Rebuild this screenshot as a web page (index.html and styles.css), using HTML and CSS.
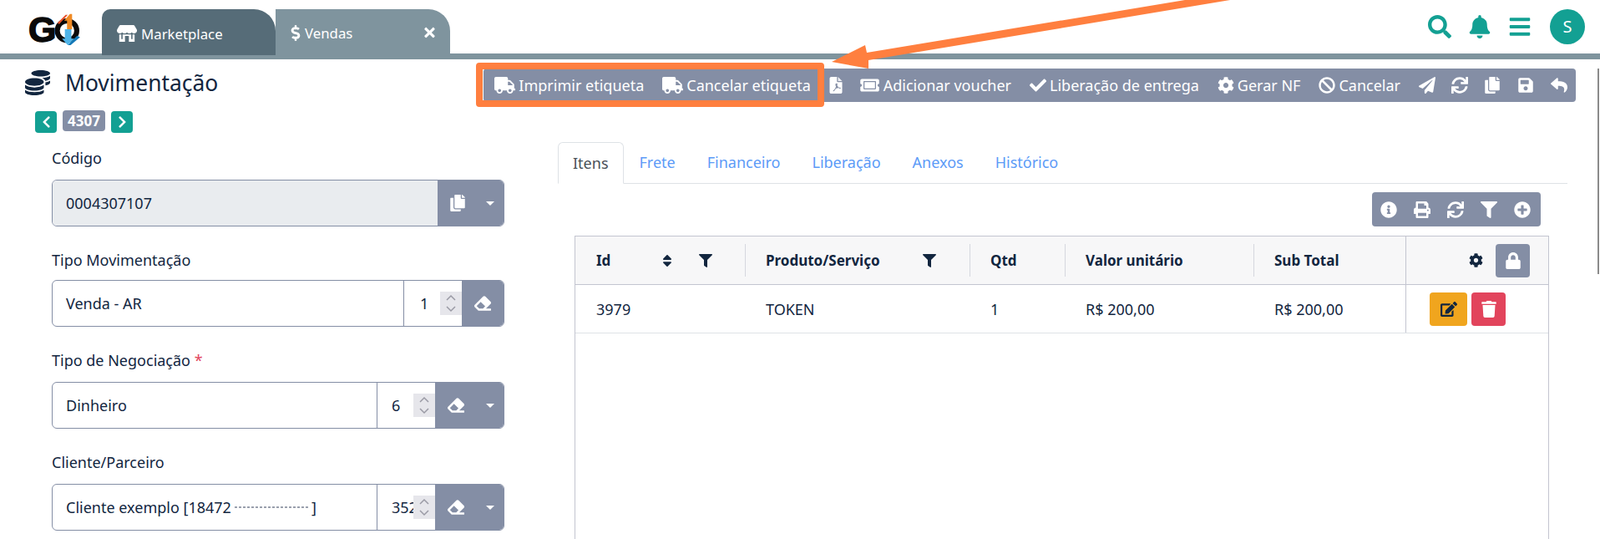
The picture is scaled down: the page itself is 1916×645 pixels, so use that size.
FILE: index.html
```html
<!DOCTYPE html>
<html lang="pt-BR">
  <head>
    <meta charset="UTF-8" />
    <title>Movimentação</title>
    <link rel="stylesheet" href="styles.css">
  </head>
  <body>
    <svg class="sprites" xmlns="http://www.w3.org/2000/svg">
      <symbol id="i-search" viewBox="0 0 512 512"><path d="M505 442.7L405.3 343c-4.5-4.5-10.6-7-17-7H372c27.6-35.3 44-79.7 44-128C416 93.1 322.9 0 208 0S0 93.1 0 208s93.1 208 208 208c48.3 0 92.7-16.4 128-44v16.3c0 6.4 2.5 12.5 7 17l99.7 99.7c9.4 9.4 24.6 9.4 33.9 0l28.3-28.3c9.4-9.4 9.4-24.6.1-34zM208 336c-70.7 0-128-57.2-128-128 0-70.7 57.2-128 128-128 70.7 0 128 57.2 128 128 0 70.7-57.2 128-128 128z"/></symbol>
      <symbol id="i-bell" viewBox="0 0 448 512"><path d="M224 512c35.32 0 63.97-28.65 63.97-64H160.03c0 35.35 28.65 64 63.97 64zm215.39-149.71c-19.32-20.76-55.47-51.99-55.47-154.29 0-77.7-54.48-139.9-127.94-155.16V32c0-17.67-14.32-32-31.98-32s-31.98 14.33-31.98 32v20.84C118.56 68.1 64.08 130.3 64.08 208c0 102.3-36.15 133.53-55.47 154.29-6 6.45-8.66 14.16-8.61 21.71.11 16.4 12.98 32 32.1 32h383.8c19.12 0 32-15.6 32.1-32 .05-7.55-2.61-15.27-8.61-21.71z"/></symbol>
      <symbol id="i-bars" viewBox="0 0 448 512"><path d="M16 132h416c8.837 0 16-7.163 16-16V76c0-8.837-7.163-16-16-16H16C7.163 60 0 67.163 0 76v40c0 8.837 7.163 16 16 16zm0 160h416c8.837 0 16-7.163 16-16v-40c0-8.837-7.163-16-16-16H16c-8.837 0-16 7.163-16 16v40c0 8.837 7.163 16 16 16zm0 160h416c8.837 0 16-7.163 16-16v-40c0-8.837-7.163-16-16-16H16c-8.837 0-16 7.163-16 16v40c0 8.837 7.163 16 16 16z"/></symbol>
      <symbol id="i-truck" viewBox="0 0 640 512"><path d="M624 352h-16V243.9c0-12.7-5.1-24.9-14.1-33.9L494 110.1c-9-9-21.2-14.1-33.9-14.1H416V48c0-26.5-21.5-48-48-48H48C21.5 0 0 21.5 0 48v320c0 26.5 21.5 48 48 48h16c0 53 43 96 96 96s96-43 96-96h128c0 53 43 96 96 96s96-43 96-96h48c8.8 0 16-7.2 16-16v-32c0-8.8-7.2-16-16-16zM160 464c-26.5 0-48-21.5-48-48s21.5-48 48-48 48 21.5 48 48-21.5 48-48 48zm320 0c-26.5 0-48-21.5-48-48s21.5-48 48-48 48 21.5 48 48-21.5 48-48 48zm80-208H416V144h44.1l99.9 99.9V256z"/></symbol>
      <symbol id="i-copy" viewBox="0 0 448 512"><path d="M320 448v40c0 13.255-10.745 24-24 24H24c-13.255 0-24-10.745-24-24V120c0-13.255 10.745-24 24-24h72v296c0 30.879 25.121 56 56 56h168zm0-344V0H152c-13.255 0-24 10.745-24 24v368c0 13.255 10.745 24 24 24h272c13.255 0 24-10.745 24-24V128H344c-13.2 0-24-10.8-24-24zm120.971-31.029L375.029 7.029A24 24 0 0 0 358.059 0H352v96h96v-6.059a24 24 0 0 0-7.029-16.97z"/></symbol>
      <symbol id="i-save" viewBox="0 0 448 512"><path d="M433.941 129.941l-83.882-83.882A48 48 0 0 0 316.118 32H48C21.49 32 0 53.49 0 80v352c0 26.51 21.49 48 48 48h352c26.51 0 48-21.49 48-48V163.882a48 48 0 0 0-14.059-33.941zM224 416c-35.346 0-64-28.654-64-64 0-35.346 28.654-64 64-64s64 28.654 64 64c0 35.346-28.654 64-64 64zm96-304.52V212c0 6.627-5.373 12-12 12H76c-6.627 0-12-5.373-12-12V108c0-6.627 5.373-12 12-12h228.52c3.183 0 6.235 1.264 8.485 3.515l3.48 3.48A11.996 11.996 0 0 1 320 111.48z"/></symbol>
      <symbol id="i-reply" viewBox="0 0 512 512"><path d="M8.309 189.836L184.313 37.851C199.719 24.546 224 35.347 224 56.015v80.053c160.629 1.839 288 34.032 288 186.258 0 61.441-39.581 122.309-83.333 154.132-13.653 9.931-33.111-2.533-28.077-18.631 45.344-145.012-21.507-183.51-176.59-185.742V360c0 20.7-24.3 31.453-39.687 18.164l-176.004-152c-11.071-9.562-11.086-26.753 0-36.328z"/></symbol>
      <symbol id="i-plane" viewBox="0 0 512 512"><path d="M476 3.2L12.5 270.6c-18.1 10.4-15.8 35.6 2.2 43.2L121 358.4l287.3-253.2c5.5-4.9 13.3 2.6 8.6 8.3L176 407v80.5c0 23.6 28.5 32.9 42.5 15.8L282 426l124.6 52.2c14.2 6 30.4-2.9 33-18.2l72-432C515 7.8 493.3-6.8 476 3.2z"/></symbol>
      <symbol id="i-sync" viewBox="0 0 512 512"><path d="M440.65 12.57l4 82.77A247.16 247.16 0 0 0 255.83 8C134.73 8 33.91 94.92 12.29 209.82A12 12 0 0 0 24.09 224h49.05a12 12 0 0 0 11.67-9.26 175.91 175.91 0 0 1 317-56.94l-101.46-4.86a12 12 0 0 0-12.57 12v47.41a12 12 0 0 0 12 12H500a12 12 0 0 0 12-12V12a12 12 0 0 0-12-12h-47.37a12 12 0 0 0-11.98 12.57zM255.83 432a175.61 175.61 0 0 1-146-77.8l101.8 4.87a12 12 0 0 0 12.57-12v-47.4a12 12 0 0 0-12-12H12a12 12 0 0 0-12 12V500a12 12 0 0 0 12 12h47.35a12 12 0 0 0 12-12.6l-4.15-82.57A247.17 247.17 0 0 0 255.83 504c121.11 0 221.93-86.92 243.55-201.82a12 12 0 0 0-11.8-14.18h-49.05a12 12 0 0 0-11.67 9.26A175.86 175.86 0 0 1 255.83 432z"/></symbol>
      <symbol id="i-cog" viewBox="0 0 512 512"><path d="M487.4 315.7l-42.6-24.6c4.3-23.2 4.3-47 0-70.2l42.6-24.6c4.9-2.8 7.1-8.6 5.5-14-11.1-35.6-30-67.8-54.7-94.6-3.8-4.1-10-5.1-14.8-2.3L380.8 110c-17.9-15.4-38.5-27.3-60.8-35.1V25.8c0-5.6-3.9-10.5-9.4-11.7-36.7-8.2-74.3-7.8-109.2 0-5.5 1.2-9.4 6.1-9.4 11.7V75c-22.2 7.9-42.8 19.8-60.8 35.1L88.7 85.5c-4.9-2.8-11-1.9-14.8 2.3-24.7 26.7-43.6 58.9-54.7 94.6-1.7 5.4.6 11.2 5.5 14L67.3 221c-4.3 23.2-4.3 47 0 70.2l-42.6 24.6c-4.9 2.8-7.1 8.6-5.5 14 11.1 35.6 30 67.8 54.7 94.6 3.8 4.1 10 5.1 14.8 2.3l42.6-24.6c17.9 15.4 38.5 27.3 60.8 35.1v49.2c0 5.6 3.9 10.5 9.4 11.7 36.7 8.2 74.3 7.8 109.2 0 5.5-1.2 9.4-6.1 9.4-11.7v-49.2c22.2-7.9 42.8-19.8 60.8-35.1l42.6 24.6c4.9 2.8 11 1.9 14.8-2.3 24.7-26.7 43.6-58.9 54.7-94.6 1.5-5.5-.7-11.3-5.6-14.1zM256 336c-44.1 0-80-35.9-80-80s35.9-80 80-80 80 35.9 80 80-35.9 80-80 80z"/></symbol>
      <symbol id="i-ban" viewBox="0 0 512 512"><path d="M256 8C119.034 8 8 119.033 8 256s111.034 248 248 248 248-111.034 248-248S392.967 8 256 8zm130.108 117.892c65.448 65.448 70 165.481 20.677 235.637L150.47 105.216c70.204-49.356 170.226-44.735 235.638 20.676zM125.892 386.108c-65.448-65.448-70-165.481-20.677-235.637L361.53 406.784c-70.203 49.356-170.226 44.736-235.638-20.676z"/></symbol>
      <symbol id="i-check" viewBox="0 0 512 512"><path d="M173.898 439.404l-166.4-166.4c-9.997-9.997-9.997-26.206 0-36.204l36.203-36.204c9.997-9.998 26.207-9.998 36.204 0L192 312.69 432.095 72.596c9.997-9.997 26.207-9.997 36.204 0l36.203 36.204c9.997 9.997 9.997 26.206 0 36.204l-294.4 294.401c-9.998 9.997-26.207 9.997-36.204-.001z"/></symbol>
      <symbol id="i-ticket" viewBox="0 0 576 512"><path d="M128 160h320v192H128V160zm400 96c0 26.51 21.49 48 48 48v96c0 26.51-21.49 48-48 48H48c-26.51 0-48-21.49-48-48v-96c26.51 0 48-21.49 48-48s-21.49-48-48-48v-96c0-26.51 21.49-48 48-48h480c26.51 0 48 21.49 48 48v96c-26.51 0-48 21.49-48 48zm-48-104c0-13.255-10.745-24-24-24H120c-13.255 0-24 10.745-24 24v208c0 13.255 10.745 24 24 24h336c13.255 0 24-10.745 24-24V152z"/></symbol>
      <symbol id="i-pdf" viewBox="0 0 384 512"><path d="M224 0H48C21.5 0 0 21.5 0 48v416c0 26.5 21.5 48 48 48h288c26.5 0 48-21.5 48-48V160H248c-13.2 0-24-10.8-24-24z"/><path d="M256 0v128h128z" opacity=".85"/><path fill="#848ea5" d="M180 210c-8 30-2 60 14 92-14 36-36 74-58 96-30 20-38 36-24 42 22 6 52-30 78-82 26-10 56-18 84-22 26 22 60 30 70 16 8-14-22-28-64-26-20-18-36-40-48-64 10-34 10-62-8-64-24-2-30 4-44 12z"/></symbol>
      <symbol id="i-eraser" viewBox="0 0 512 512"><path d="M497.941 273.941c18.745-18.745 18.745-49.137 0-67.882l-160-160c-18.745-18.745-49.137-18.745-67.882 0l-256 256c-18.745 18.745-18.745 49.137 0 67.882l96 96A48.004 48.004 0 0 0 144 480h356c6.627 0 12-5.373 12-12v-40c0-6.627-5.373-12-12-12H355.883l142.058-142.059zm-302.627-62.627l137.373 137.373L265.373 416H150.628l-80-80 124.686-124.686z"/></symbol>
      <symbol id="i-filter" viewBox="0 0 512 512"><path d="M487.976 0H24.028C2.71 0-8.047 25.866 7.058 40.971L192 225.941V432c0 7.831 3.821 15.17 10.237 19.662l80 55.98C298.02 518.69 320 507.493 320 487.98V225.941l184.947-184.97C520.021 25.896 509.338 0 487.976 0z"/></symbol>
      <symbol id="i-sort" viewBox="0 0 320 512"><path d="M41 288h238c21.4 0 32.1 25.9 17 41L177 448c-9.4 9.4-24.6 9.4-33.9 0L24 329c-15.1-15.1-4.4-41 17-41zm255-105L177 64c-9.4-9.4-24.6-9.4-33.9 0L24 183c-15.1 15.1-4.4 41 17 41h238c21.4 0 32.1-25.9 17-41z"/></symbol>
      <symbol id="i-lock" viewBox="0 0 448 512"><path d="M400 224h-24v-72C376 68.2 307.8 0 224 0S72 68.2 72 152v72H48c-26.5 0-48 21.5-48 48v192c0 26.5 21.5 48 48 48h352c26.5 0 48-21.5 48-48V272c0-26.5-21.5-48-48-48zm-104 0H152v-72c0-39.7 32.3-72 72-72s72 32.3 72 72v72z"/></symbol>
      <symbol id="i-edit" viewBox="0 0 576 512"><path d="M402.6 83.2l90.2 90.2c3.8 3.8 3.8 10 0 13.8L274.4 405.6l-92.8 10.3c-12.4 1.4-22.9-9.1-21.5-21.5l10.3-92.8L388.8 83.2c3.8-3.8 10-3.8 13.8 0zm162-22.9l-48.8-48.8c-15.2-15.2-39.9-15.2-55.2 0l-35.4 35.4c-3.8 3.8-3.8 10 0 13.8l90.2 90.2c3.8 3.8 10 3.8 13.8 0l35.4-35.4c15.2-15.3 15.2-40 0-55.2zM384 346.2V448H64V128h229.8c3.2 0 6.2-1.3 8.5-3.5l40-40c7.6-7.6 2.2-20.5-8.5-20.5H48C21.5 64 0 85.5 0 112v352c0 26.5 21.5 48 48 48h352c26.5 0 48-21.5 48-48V306.2c0-10.7-12.9-16-20.5-8.5l-40 40c-2.2 2.3-3.5 5.3-3.5 8.5z"/></symbol>
      <symbol id="i-trash" viewBox="0 0 448 512"><path d="M432 32H312l-9.4-18.7A24 24 0 0 0 281.1 0H166.8a23.72 23.72 0 0 0-21.4 13.3L136 32H16A16 16 0 0 0 0 48v32a16 16 0 0 0 16 16h416a16 16 0 0 0 16-16V48a16 16 0 0 0-16-16zM53.2 467a48 48 0 0 0 47.9 45h245.8a48 48 0 0 0 47.9-45L416 128H32z"/></symbol>
      <symbol id="i-info" viewBox="0 0 512 512"><path d="M256 8C119.043 8 8 119.083 8 256c0 136.997 111.043 248 248 248s248-111.003 248-248C504 119.083 392.957 8 256 8zm0 110c23.196 0 42 18.804 42 42s-18.804 42-42 42-42-18.804-42-42 18.804-42 42-42zm56 254c0 6.627-5.373 12-12 12h-88c-6.627 0-12-5.373-12-12v-24c0-6.627 5.373-12 12-12h12v-64h-12c-6.627 0-12-5.373-12-12v-24c0-6.627 5.373-12 12-12h64c6.627 0 12 5.373 12 12v100h12c6.627 0 12 5.373 12 12v24z"/></symbol>
      <symbol id="i-print" viewBox="0 0 512 512"><path d="M448 192V77.25c0-8.49-3.37-16.62-9.37-22.63L393.37 9.37c-6-6-14.14-9.37-22.63-9.37H96C78.33 0 64 14.33 64 32v160c-35.35 0-64 28.65-64 64v112c0 8.84 7.16 16 16 16h48v96c0 17.67 14.33 32 32 32h320c17.67 0 32-14.33 32-32v-96h48c8.84 0 16-7.16 16-16V256c0-35.35-28.65-64-64-64zm-64 256H128v-96h256v96zm0-224H128V64h192v48c0 8.84 7.16 16 16 16h48v96zm48 72c-13.25 0-24-10.75-24-24 0-13.26 10.75-24 24-24s24 10.74 24 24c0 13.25-10.75 24-24 24z"/></symbol>
      <symbol id="i-plus" viewBox="0 0 512 512"><path d="M256 8C119 8 8 119 8 256s111 248 248 248 248-111 248-248S393 8 256 8zm144 276c0 6.6-5.4 12-12 12h-92v92c0 6.6-5.4 12-12 12h-56c-6.6 0-12-5.4-12-12v-92h-92c-6.6 0-12-5.4-12-12v-56c0-6.6 5.4-12 12-12h92v-92c0-6.6 5.4-12 12-12h56c6.6 0 12 5.4 12 12v92h92c6.6 0 12 5.4 12 12v56z"/></symbol>
      <symbol id="i-times" viewBox="0 0 352 512"><path d="M242.72 256l100.07-100.07c12.28-12.28 12.28-32.19 0-44.48l-22.24-22.24c-12.28-12.28-32.19-12.28-44.48 0L176 189.28 75.93 89.21c-12.28-12.28-32.19-12.28-44.48 0L9.21 111.45c-12.28 12.28-12.28 32.19 0 44.48L109.28 256 9.21 356.07c-12.28 12.28-12.28 32.19 0 44.48l22.24 22.24c12.28 12.28 32.2 12.28 44.48 0L176 322.72l100.07 100.07c12.28 12.28 32.2 12.28 44.48 0l22.24-22.24c12.28-12.28 12.28-32.19 0-44.48L242.72 256z"/></symbol>
      <symbol id="i-dollar" viewBox="0 0 288 512"><path d="M209.2 233.4l-108-31.6C88.7 198.2 80 186.5 80 173.5c0-16.3 13.2-29.5 29.5-29.5h66.3c12.2 0 24.2 3.7 34.2 10.5 6.1 4.1 14.3 3.1 19.5-2l34.8-34c7.1-6.9 6.1-18.4-1.8-24.5C238 74.8 207.4 64.1 176 64V16c0-8.8-7.2-16-16-16h-32c-8.8 0-16 7.2-16 16v48h-2.5C45.8 64-5.4 118.7.5 183.6c4.2 46.1 39.4 83.6 83.8 96.6l102.5 30c12.5 3.7 21.2 15.3 21.2 28.3 0 16.3-13.2 29.5-29.5 29.5h-66.3C100 368 88 364.3 78 357.5c-6.1-4.1-14.3-3.1-19.5 2l-34.8 34c-7.1 6.9-6.1 18.4 1.8 24.5 24.5 19.2 55.1 29.9 86.5 30v48c0 8.8 7.2 16 16 16h32c8.8 0 16-7.2 16-16v-48.2c46.6-.9 90.3-28.6 105.7-72.7 21.5-61.6-14.6-124.8-72.5-141.7z"/></symbol>
      <symbol id="i-store" viewBox="0 0 616 512"><path d="M602 118.6L537.1 15C531.3 5.7 521 0 510 0H106C95 0 84.7 5.7 78.9 15L14 118.6c-27 43-12 100 30 125 12 7 28 12 43 12 30 0 56-13 74-34 18 21 45 34 74 34s56-13 74-34c18 21 45 34 74 34s56-13 74-34c18 21 45 34 74 34 15 0 31-5 43-12 42-25 57-82 28-125z"/><path d="M72 288v224h176V336h120v176h176V288h-64v144h-40V288H176v144h-40V288z"/></symbol>
      <symbol id="i-coins" viewBox="0 0 512 512"><path d="M0 405.3V448c0 35.3 86 64 192 64s192-28.7 192-64v-42.7C342.7 434.4 267.2 448 192 448S41.3 434.4 0 405.3zM320 128c106 0 192-28.7 192-64S426 0 320 0 128 28.7 128 64s86 64 192 64zM0 300.4V352c0 35.3 86 64 192 64s192-28.7 192-64v-51.6c-41.3 34-116.9 51.6-192 51.6S41.3 334.4 0 300.4zm416 11c57.3-11.1 96-31.7 96-55.4v-42.7c-23.2 16.4-57.3 27.6-96 34.5v63.6zM192 160C86 160 0 195.8 0 240s86 80 192 80 192-35.8 192-80-86-80-192-80zm219.3 56.3c60-10.8 100.7-32 100.7-56.3v-42.7c-35.5 25.1-96.5 38.6-160.7 41.8 29.5 14.3 51.2 33.5 60 57.2z"/></symbol>
      <symbol id="i-left" viewBox="0 0 320 512"><path d="M34.52 239.03L228.87 44.69c9.37-9.37 24.57-9.37 33.94 0l22.67 22.67c9.36 9.36 9.37 24.52.04 33.9L131.49 256l154.02 154.75c9.34 9.38 9.32 24.54-.04 33.9l-22.67 22.67c-9.37 9.37-24.57 9.37-33.94 0L34.52 272.97c-9.37-9.37-9.37-24.57 0-33.94z"/></symbol>
      <symbol id="i-right" viewBox="0 0 320 512"><path d="M285.476 272.971L91.132 467.314c-9.373 9.373-24.569 9.373-33.941 0l-22.667-22.667c-9.357-9.357-9.375-24.522-.04-33.901L188.505 256 34.484 101.255c-9.335-9.379-9.317-24.544.04-33.901l22.667-22.667c9.373-9.373 24.569-9.373 33.941 0L285.475 239.03c9.373 9.372 9.373 24.568.001 33.941z"/></symbol>
      <symbol id="i-spin" viewBox="0 0 26 28"><path d="M8 10l5-5 5 5M8 18l5 5 5-5" fill="none" stroke="#9a9aa5" stroke-width="1.5"/></symbol>
    </svg>

    <header class="topbar">
      <div class="logo">
        <span class="logo-text">G</span>
        <svg class="logo-mark" viewBox="0 0 44 44">
          <circle cx="20" cy="24" r="13.5" fill="none" stroke="#0a0a0a" stroke-width="7"/>
          <path d="M38 33L25 44H21L34 31z" fill="#1479b8"/>
          <path d="M7 13L18 2h3L9 15z" fill="#e8502a"/>
          <path d="M24 1L16 10h4v12h7V1z" fill="#f08a24"/>
          <path d="M17 22h9v13h4L21 44 13 35h4z" fill="#4fb4e8"/>
        </svg>
      </div>
      <nav class="tabs-top">
        <a class="tab-top active"><svg class="ico"><use href="#i-store"/></svg>Marketplace</a>
        <a class="tab-top"><svg class="ico ico-dollar"><use href="#i-dollar"/></svg>Vendas<svg class="ico tab-close"><use href="#i-times"/></svg></a>
      </nav>
      <div class="top-icons">
        <svg class="top-ico"><use href="#i-search"/></svg>
        <svg class="top-ico"><use href="#i-bell"/></svg>
        <svg class="top-ico"><use href="#i-bars"/></svg>
        <span class="avatar">S</span>
      </div>
    </header>

    <main class="page">
      <div class="page-head">
        <div class="title-block">
          <h1 class="title"><svg class="title-ico"><use href="#i-coins"/></svg>Movimentação</h1>
          <div class="pager">
            <a class="pager-btn"><svg class="ico"><use href="#i-left"/></svg></a>
            <span class="pager-num">4307</span>
            <a class="pager-btn"><svg class="ico"><use href="#i-right"/></svg></a>
          </div>
        </div>
        <div class="toolbar">
          <a class="tool labelled"><svg class="ico ico-wide"><use href="#i-truck"/></svg>Imprimir etiqueta</a>
          <a class="tool labelled"><svg class="ico ico-wide"><use href="#i-truck"/></svg>Cancelar etiqueta</a>
          <a class="tool"><svg class="ico ico-pdf"><use href="#i-pdf"/></svg></a>
          <a class="tool labelled"><svg class="ico ico-wide"><use href="#i-ticket"/></svg>Adicionar voucher</a>
          <a class="tool labelled"><svg class="ico"><use href="#i-check"/></svg>Liberação de entrega</a>
          <a class="tool labelled"><svg class="ico"><use href="#i-cog"/></svg>Gerar NF</a>
          <a class="tool labelled"><svg class="ico"><use href="#i-ban"/></svg>Cancelar</a>
          <a class="tool"><svg class="ico"><use href="#i-plane"/></svg></a>
          <a class="tool tight"><svg class="ico"><use href="#i-sync"/></svg></a>
          <a class="tool tight"><svg class="ico"><use href="#i-copy"/></svg></a>
          <a class="tool"><svg class="ico"><use href="#i-save"/></svg></a>
          <a class="tool"><svg class="ico"><use href="#i-reply"/></svg></a>
        </div>
      </div>

      <div class="content">
        <section class="form">
          <div class="field">
            <label>Código</label>
            <div class="group">
              <div class="control disabled">0004307107</div>
              <a class="addon addon-copy"><svg class="ico"><use href="#i-copy"/></svg></a>
              <a class="addon caret"></a>
            </div>
          </div>
          <div class="field">
            <label>Tipo Movimentação</label>
            <div class="group">
              <div class="control">Venda - AR</div>
              <div class="number n-short">1<svg class="spin"><use href="#i-spin"/></svg></div>
              <a class="addon"><svg class="ico"><use href="#i-eraser"/></svg></a>
            </div>
          </div>
          <div class="field">
            <label>Tipo de Negociação <span class="req">*</span></label>
            <div class="group">
              <div class="control">Dinheiro</div>
              <div class="number">6<svg class="spin"><use href="#i-spin"/></svg></div>
              <a class="addon"><svg class="ico"><use href="#i-eraser"/></svg></a>
              <a class="addon caret"></a>
            </div>
          </div>
          <div class="field">
            <label>Cliente/Parceiro</label>
            <div class="group">
              <div class="control">Cliente exemplo [18472<span class="blurred"></span>]</div>
              <div class="number">3522<svg class="spin"><use href="#i-spin"/></svg></div>
              <a class="addon"><svg class="ico"><use href="#i-eraser"/></svg></a>
              <a class="addon caret"></a>
            </div>
          </div>
        </section>

        <section class="detail">
          <ul class="tabs">
            <li class="tab active">Itens</li>
            <li class="tab">Frete</li>
            <li class="tab">Financeiro</li>
            <li class="tab">Liberação</li>
            <li class="tab">Anexos</li>
            <li class="tab">Histórico</li>
          </ul>
          <div class="tools-row">
            <div class="toolbar-small">
              <svg class="ico"><use href="#i-info"/></svg>
              <svg class="ico"><use href="#i-print"/></svg>
              <svg class="ico"><use href="#i-sync"/></svg>
              <svg class="ico"><use href="#i-filter"/></svg>
              <svg class="ico"><use href="#i-plus"/></svg>
            </div>
          </div>
          <div class="table">
            <div class="row head">
              <div class="cell c-id"><b>Id</b><svg class="ico sort"><use href="#i-sort"/></svg><svg class="ico funnel"><use href="#i-filter"/></svg></div>
              <div class="cell c-prod"><b>Produto/Serviço</b><svg class="ico funnel"><use href="#i-filter"/></svg></div>
              <div class="cell c-qtd"><b>Qtd</b></div>
              <div class="cell c-val"><b>Valor unitário</b></div>
              <div class="cell c-sub"><b>Sub Total</b></div>
              <div class="cell c-act">
                <svg class="ico gear"><use href="#i-cog"/></svg>
                <a class="lock"><svg class="ico"><use href="#i-lock"/></svg></a>
              </div>
            </div>
            <div class="row">
              <div class="cell c-id">3979</div>
              <div class="cell c-prod">TOKEN</div>
              <div class="cell c-qtd">1</div>
              <div class="cell c-val">R$ 200,00</div>
              <div class="cell c-sub">R$ 200,00</div>
              <div class="cell c-act">
                <a class="btn-edit"><svg class="ico"><use href="#i-edit"/></svg></a>
                <a class="btn-del"><svg class="ico"><use href="#i-trash"/></svg></a>
              </div>
            </div>
          </div>
        </section>
      </div>
    </main>

    <div class="scroll-thumb"></div>

    <!-- marcacao em laranja por cima do print -->
    <div class="mark-box"></div>
    <svg class="mark-arrow" viewBox="0 0 1916 645">
      <path d="M996 74L1036 54 1038 63 1419 0 1473 0 1040 72 1040 82z" fill="#ff7f3f"/>
    </svg>
  </body>
</html>
```

FILE: styles.css
```css
* {
  margin: 0;
  padding: 0;
  box-sizing: border-box;
  list-style: none;
}
html,
body {
  height: 645px;
  overflow: hidden;
}
body {
  position: relative;
  font-family: "Noto Sans", "Open Sans", sans-serif;
  font-size: 18px;
  color: #12263f;
  background: #fff;
}
a {
  color: inherit;
}
.sprites {
  display: none;
}
.ico {
  width: 20px;
  height: 20px;
  fill: currentColor;
  flex: none;
}
.ico-wide {
  width: 25px;
}
.ico-pdf {
  width: 16px;
}

/* barra de cima */
.topbar {
  display: flex;
  align-items: flex-end;
  height: 71px;
  padding-left: 34px;
  border-bottom: 7px solid #7f949e;
}
.logo {
  display: flex;
  align-items: center;
  width: 88px;
  height: 46px;
  margin-bottom: 6px;
}
.logo-text {
  font-family: "Liberation Sans", sans-serif;
  font-weight: 700;
  font-size: 43px;
  line-height: 40px;
  color: #0a0a0a;
  -webkit-text-stroke: 1.5px #0a0a0a;
}
.logo-mark {
  width: 38px;
  height: 40px;
  margin-left: -4px;
}
.tabs-top {
  display: flex;
  height: 53px;
}
.tab-top {
  display: flex;
  align-items: center;
  gap: 5px;
  width: 209px;
  height: 53px;
  padding: 3px 18px 0;
  font-size: 16.8px;
  color: #fff;
  background: #7f949e;
  border-radius: 0 26px 0 0;
}
.tab-top.active {
  background: #566c78;
  height: 55px;
  width: 208px;
  border-radius: 10px 26px 0 0;
}
.tab-top .ico {
  width: 24px;
}
.tab-top .ico-dollar {
  width: 12px;
  height: 19px;
}
.tab-top .tab-close {
  width: 13px;
  height: 18px;
  margin-left: auto;
  margin-right: 0;
}
.top-icons {
  display: flex;
  align-items: center;
  gap: 20px;
  margin-left: auto;
  margin-right: 18px;
  height: 54px;
  margin-bottom: 5px;
  color: #13a093;
}
.top-ico {
  width: 28px;
  height: 28px;
  fill: currentColor;
}
.avatar {
  width: 42px;
  height: 42px;
  margin-left: 2px;
  border-radius: 50%;
  background: #13a093;
  color: #fff;
  font-size: 20px;
  line-height: 42px;
  text-align: center;
}

/* cabecalho da pagina */
.page {
  padding: 11px 29px 0 30px;
}
.page-head {
  display: flex;
  justify-content: space-between;
  align-items: flex-start;
}
.title {
  display: flex;
  align-items: center;
  gap: 18px;
  font-size: 26.4px;
  font-weight: 400;
  line-height: 34px;
  color: #12263f;
}
.title-ico {
  width: 30px;
  height: 30px;
  fill: currentColor;
}
.pager {
  display: flex;
  align-items: flex-start;
  gap: 7px;
  margin: 17px 0 0 12px;
}
.pager-btn {
  display: flex;
  align-items: center;
  justify-content: center;
  width: 26px;
  height: 26px;
  border-radius: 4px;
  background: #13a093;
  color: #fff;
}
.pager-btn .ico {
  width: 13px;
  height: 16px;
}
.pager-num {
  width: 51px;
  height: 25px;
  margin-top: -1px;
  border-radius: 4px;
  background: #848ea5;
  color: #fff;
  font-size: 17px;
  font-weight: 700;
  line-height: 25px;
  text-align: center;
}
.toolbar {
  display: flex;
  align-items: center;
  gap: 20px;
  height: 40px;
  padding: 0 10px 0 13px;
  background: #848ea5;
  color: #fff;
  border-radius: 4px;
}
.tool {
  display: flex;
  align-items: center;
  gap: 4px;
  font-size: 18px;
  white-space: nowrap;
}
.tool.labelled {
  margin-right: 2px;
}
.tool.tight {
  margin-left: -1px;
}

/* colunas */
.content {
  display: grid;
  grid-template-columns: 542px 1209px;
  column-gap: 64px;
  padding-left: 32px;
  margin-top: 16px;
}
.field {
  margin-bottom: 26px;
}
.field:last-child {
  margin-bottom: 0;
}
.field label {
  display: block;
  height: 40px;
  font-size: 18px;
  line-height: 28px;
  color: #12263f;
}
.field:nth-child(2) label {
  height: 38px;
}
.req {
  color: #e2445c;
}
.group {
  display: flex;
  height: 56px;
  border: 1px solid #848ea5;
  border-radius: 6px;
  overflow: hidden;
  background: #fff;
}
.control {
  flex: 1;
  padding: 0 16px;
  font-size: 18px;
  line-height: 54px;
  white-space: nowrap;
  overflow: hidden;
}
.control.disabled {
  background: #e9ecef;
}
.number {
  position: relative;
  width: 70px;
  padding-left: 17px;
  border-left: 1px solid #848ea5;
  line-height: 54px;
  overflow: hidden;
}
.number.n-short {
  padding-left: 19px;
}
.spin {
  position: absolute;
  right: 0;
  top: 13px;
  width: 26px;
  height: 28px;
  background: #e6e6eb;
}
.blurred {
  display: inline-block;
  width: 90px;
  height: 2px;
  margin: 0 2px 4px 4px;
  vertical-align: middle;
  background: repeating-linear-gradient(90deg, #9aa0ad 0 3px, #fff 3px 5px);
}
.addon {
  display: flex;
  align-items: center;
  justify-content: center;
  width: 50px;
  background: #848ea5;
  color: #fff;
}
.addon.addon-copy {
  width: 47px;
}
.addon.caret {
  width: 32px;
}
.addon.caret::after {
  content: "";
  border-left: 5px solid transparent;
  border-right: 5px solid transparent;
  border-top: 5px solid #fff;
}

/* abas e tabela */
.detail {
  margin-top: -5px;
}
.tabs {
  display: flex;
  height: 50px;
  border-bottom: 1px solid #dee2e6;
}
.tab {
  padding: 0 19px;
  line-height: 48px;
  font-size: 18px;
  color: #5c9bf7;
}
.tab.active {
  height: 50px;
  padding: 0 17px;
  color: #495057;
  background: #fff;
  border: 1px solid #dee2e6;
  border-bottom-color: #fff;
  border-radius: 6px 6px 0 0;
}
.tools-row {
  display: flex;
  justify-content: flex-end;
  width: 1177px;
  padding-top: 10px;
  height: 62px;
}
.toolbar-small {
  display: flex;
  align-items: center;
  gap: 20px;
  height: 41px;
  padding: 0 12px 0 10px;
  background: #848ea5;
  border-radius: 4px;
  color: #fff;
}
.table {
  width: 1167px;
  height: 363px;
  margin-left: 20px;
  border: 1px solid #c3c5d0;
  border-bottom: 0;
}
.row {
  display: grid;
  grid-template-columns: 203px 269px 114px 226px 182px 171px;
  height: 58px;
  border-bottom: 1px solid #dee2e6;
  font-size: 18px;
}
.row.head {
  background: #f7f7f8;
  border-bottom: 1px solid #c3c5d0;
}
.cell {
  display: flex;
  align-items: center;
  padding-left: 25px;
  position: relative;
}
.head .cell + .cell::before {
  content: "";
  position: absolute;
  left: 0;
  top: 9px;
  bottom: 9px;
  width: 1px;
  background: #d5d7de;
}
.c-act {
  justify-content: flex-end;
  gap: 5px;
  padding-right: 22px;
  border-left: 1px solid #c3c5d0;
}
.head .c-act::before {
  display: none;
}
.row b {
  font-weight: 700;
  font-size: 17px;
}
.sort {
  width: 14px;
  height: 18px;
  margin-left: 61px;
}
.funnel {
  width: 16px;
  height: 16px;
  margin-left: 31px;
}
.c-prod .funnel {
  margin-left: 51px;
}
.gear {
  width: 17px;
  height: 17px;
  margin-right: 10px;
}
.lock,
.btn-edit,
.btn-del {
  display: flex;
  align-items: center;
  justify-content: center;
  height: 40px;
  border-radius: 4px;
  color: #fff;
}
.lock {
  width: 41px;
  background: #848ea5;
}
.btn-edit {
  width: 45px;
  background: #f0a51e;
  color: #12263f;
}
.btn-del {
  width: 41px;
  margin-right: 29px;
  background: #e2445c;
}

/* barra de rolagem */
.scroll-thumb {
  position: absolute;
  right: 1px;
  top: 82px;
  width: 2px;
  height: 246px;
  background: #8a8a8a;
}

/* marcacao */
.mark-box {
  position: absolute;
  left: 570px;
  top: 75px;
  width: 417px;
  height: 53px;
  border: 8px solid #ff7f3f;
  border-radius: 4px;
}
.mark-arrow {
  position: absolute;
  left: 0;
  top: 0;
  width: 1916px;
  height: 645px;
  pointer-events: none;
}
```
